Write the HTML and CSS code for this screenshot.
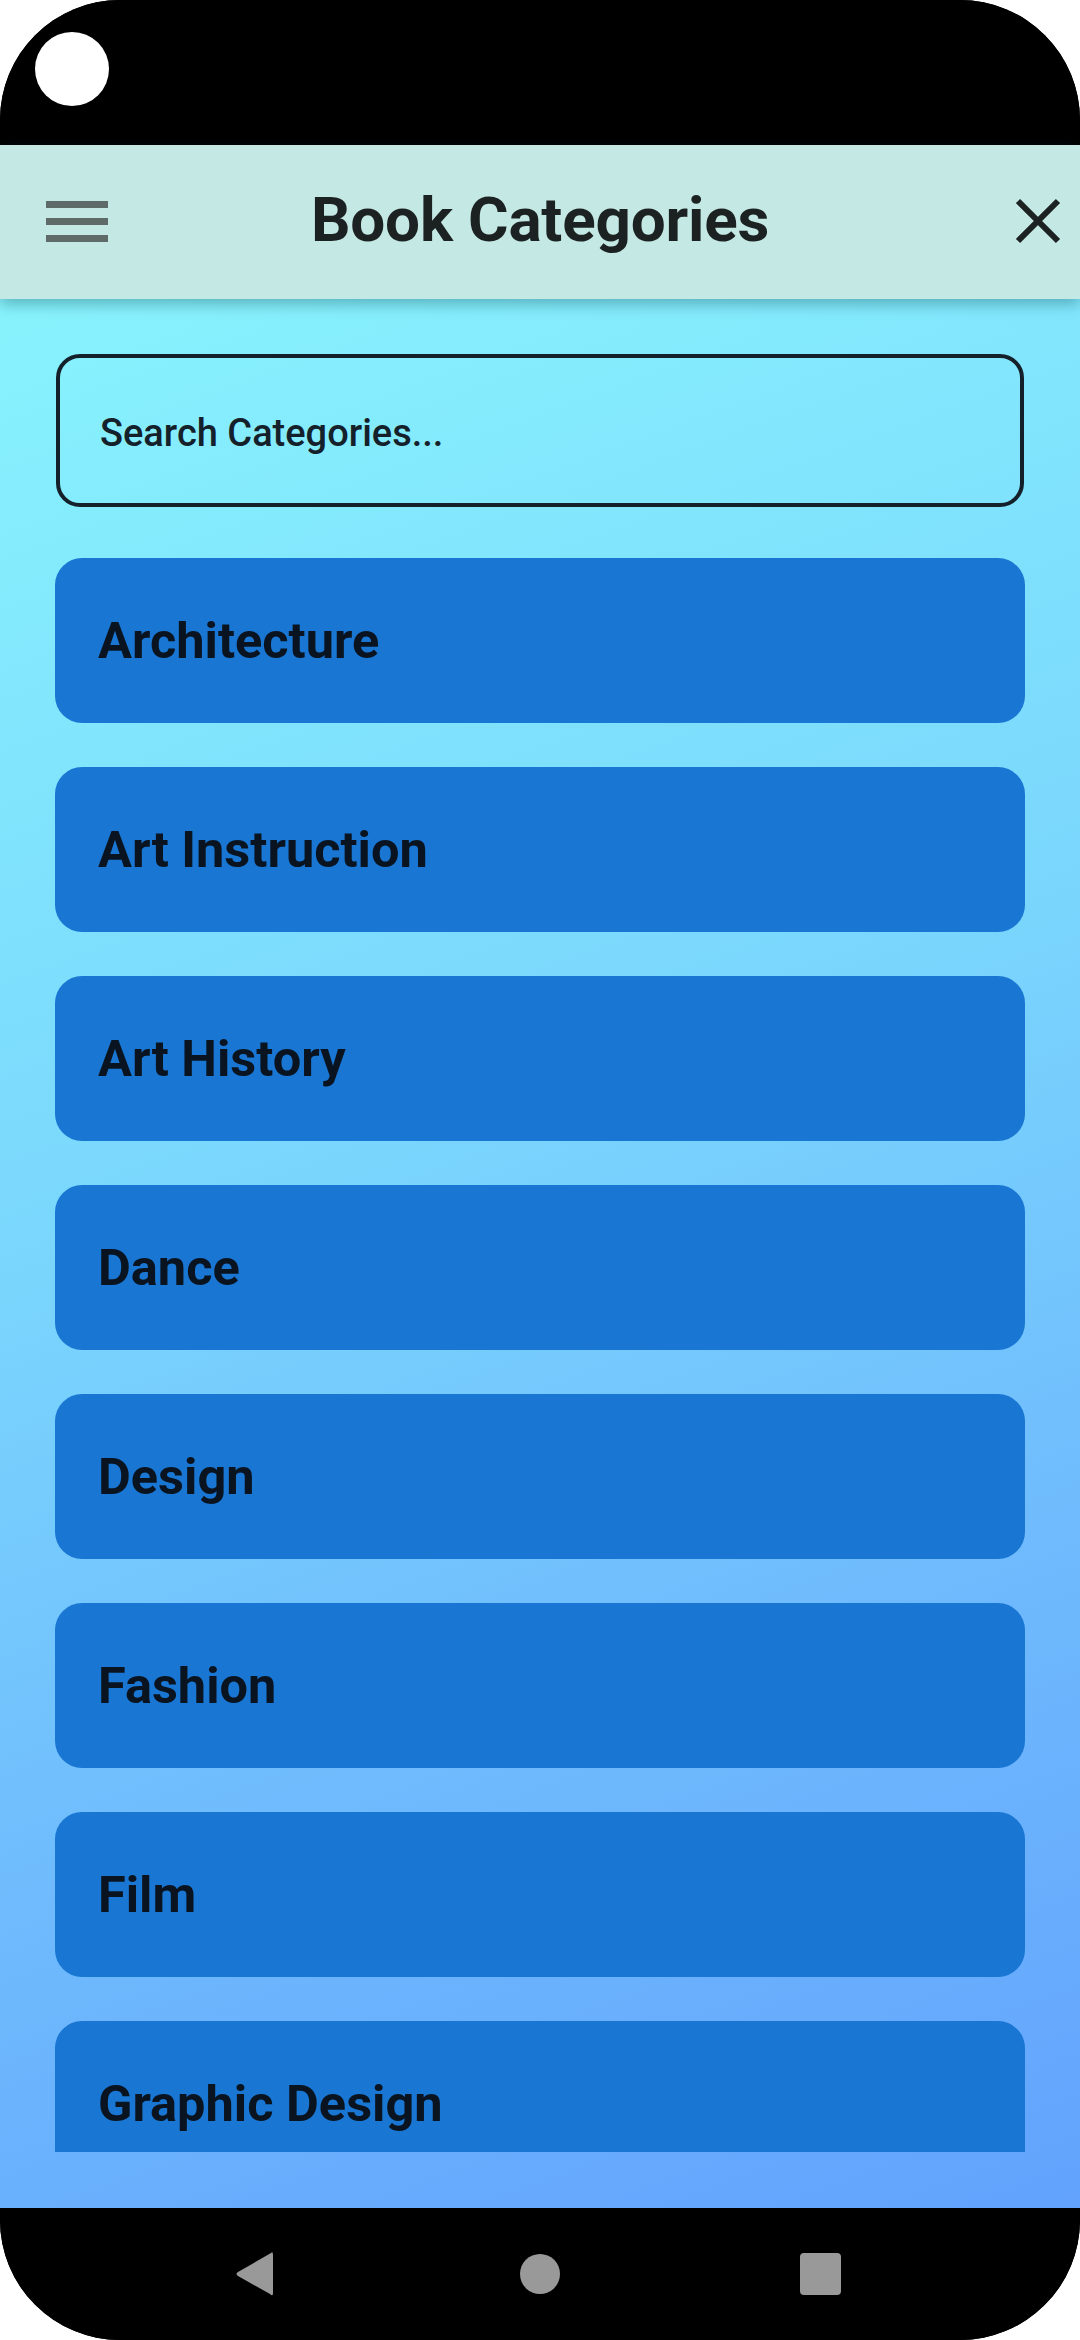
FILE: index.html
```html
<!DOCTYPE html>
<html>
<head>
<meta charset="utf-8">
<link rel="stylesheet" href="styles.css">
</head>
<body>
<div class="device">
  <div class="status">
    <div class="camera"></div>
  </div>
  <header class="appbar">
    <div class="menu"><span></span><span></span><span></span></div>
    <h1 class="title">Book Categories</h1>
    <svg class="close" viewBox="0 0 48 48" width="48" height="48"><path d="M4 4 L44 44 M44 4 L4 44" stroke="#1b2221" stroke-width="6" fill="none"/></svg>
  </header>
  <main class="content">
    <div class="search">Search Categories...</div>
    <div class="list">
      <div class="card">Architecture</div>
      <div class="card">Art Instruction</div>
      <div class="card">Art History</div>
      <div class="card">Dance</div>
      <div class="card">Design</div>
      <div class="card">Fashion</div>
      <div class="card">Film</div>
      <div class="card">Graphic Design</div>
    </div>
  </main>
  <nav class="navbar">
    <svg class="nav-icon" viewBox="0 0 40 46" width="40" height="46"><path d="M36 2 Q38 0 38 4 L38 42 Q38 46 35 43 L3 25 Q0 23 3 21 Z" fill="#999"/></svg>
    <div class="nav-home"></div>
    <div class="nav-recent"></div>
  </nav>
</div>
</body>
</html>
```
FILE: styles.css
```css
* { box-sizing: border-box; }
html, body { margin: 0; padding: 0; background: #ffffff; }
body { font-family: Roboto, "Noto Sans", sans-serif; }

.device {
  width: 1080px;
  height: 2340px;
  display: flex;
  flex-direction: column;
  border-radius: 120px;
  overflow: hidden;
  background: #000;
}

.status {
  height: 145px;
  flex: none;
  background: #000;
  padding: 32px 0 0 35px;
}
.camera {
  width: 74px;
  height: 74px;
  border-radius: 50%;
  background: #fff;
}

.appbar {
  height: 154px;
  flex: none;
  background: #c4e8e4;
  display: grid;
  grid-template-columns: 1fr auto 1fr;
  align-items: center;
  padding: 0 18px;
  position: relative;
  z-index: 2;
  box-shadow: 0 5px 14px rgba(0, 60, 70, 0.35);
}
.menu {
  display: flex;
  flex-direction: column;
  gap: 10px;
  width: 62px;
  margin-left: 28px;
  justify-self: start;
  margin-top: -1px;
}
.menu span {
  display: block;
  height: 7px;
  background: #5f6b69;
}
.title {
  margin: 0;
  font-size: 62px;
  font-weight: 700;
  color: #1b2221;
  letter-spacing: -0.2px;
  line-height: 1;
  margin-top: -4px;
}
.close {
  justify-self: end;
  margin-top: -2px;
}

.content {
  flex: 1;
  display: flex;
  flex-direction: column;
  padding: 55px 55px 56px 55px;
  background: linear-gradient(160deg, #88f3fd 0%, #7bd8fd 40%, #6fbbfd 70%, #62a2fd 100%);
  min-height: 0;
}
.search {
  height: 153px;
  flex: none;
  border: 4px solid #14212a;
  border-radius: 24px;
  margin: 0 1px;
  display: flex;
  align-items: center;
  padding-left: 40px;
  padding-top: 4px;
  font-size: 38px;
  font-weight: 500;
  color: #14212a;
}
.list {
  margin-top: 51px;
  flex: 1;
  min-height: 0;
  overflow: hidden;
  display: flex;
  flex-direction: column;
  gap: 44px;
}
.card {
  flex: none;
  height: 165px;
  background: #1976d2;
  border-radius: 27px;
  display: flex;
  align-items: center;
  padding-left: 43px;
  font-size: 50.5px;
  font-weight: 700;
  color: #0a1420;
}

.navbar {
  height: 132px;
  flex: none;
  background: #000;
  display: flex;
  align-items: center;
  padding-left: 235px;
  gap: 0;
}
.nav-icon { display: block; }
.nav-home {
  width: 40px;
  height: 40px;
  border-radius: 50%;
  background: #999;
  margin-left: 245px;
}
.nav-recent {
  width: 41px;
  height: 42px;
  border-radius: 4px;
  background: #999;
  margin-left: 240px;
}
```
